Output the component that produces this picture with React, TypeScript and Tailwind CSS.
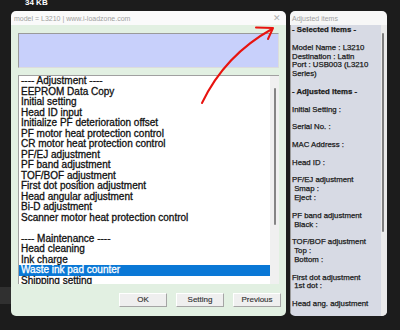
import React from "react";

const listItems: string[] = [
  "---- Adjustment ----",
  "EEPROM Data Copy",
  "Initial setting",
  "Head ID input",
  "Initialize PF deterioration offset",
  "PF motor heat protection control",
  "CR motor heat protection control",
  "PF/EJ adjustment",
  "PF band adjustment",
  "TOF/BOF adjustment",
  "First dot position adjustment",
  "Head angular adjustment",
  "Bi-D adjustment",
  "Scanner motor heat protection control",
  "",
  "---- Maintenance ----",
  "Head cleaning",
  "Ink charge",
  "Waste ink pad counter",
  "Shipping setting",
  "Printer head nozzle check",
];

const rightLines: { t: string; b?: boolean }[] = [
  { t: "- Selected items -", b: true },
  { t: "" },
  { t: "Model Name : L3210" },
  { t: "Destination : Latin" },
  { t: "Port : USB003 (L3210" },
  { t: "Series)" },
  { t: "" },
  { t: "- Adjusted items -", b: true },
  { t: "" },
  { t: "Initial Setting :" },
  { t: "" },
  { t: "Serial No. :" },
  { t: "" },
  { t: "MAC Address :" },
  { t: "" },
  { t: "Head ID :" },
  { t: "" },
  { t: "PF/EJ adjustment" },
  { t: "\u00a0Smap :" },
  { t: "\u00a0Eject :" },
  { t: "" },
  { t: "PF band adjustment" },
  { t: "\u00a0Black :" },
  { t: "" },
  { t: "TOF/BOF adjustment" },
  { t: "\u00a0Top :" },
  { t: "\u00a0Bottom :" },
  { t: "" },
  { t: "First dot adjustment" },
  { t: "\u00a01st dot :" },
  { t: "" },
  { t: "Head ang. adjustment" },
];

function Btn({ label }: { label: string }) {
  return (
    <div className="w-[48px] h-[14px] flex items-center justify-center bg-[#efefef] border border-t-[#ffffff] border-l-[#ffffff] border-r-[#a5a5a5] border-b-[#a5a5a5] text-[8px] text-[#333] leading-none [-webkit-text-stroke:0.15px_currentColor]">
      {label}
    </div>
  );
}

export default function App() {
  return (
    <div className="relative w-[400px] h-[330px] overflow-hidden bg-[#1c1c1c] font-['Liberation_Sans',Arial,sans-serif]">
      <div className="h-[11px] pl-[25px] text-[8px] font-bold text-white leading-[6px]">34 KB</div>
      <div className="absolute left-0 top-[287px] w-[11px] h-[17px] bg-[#303030]" />
      <div className="flex pl-[11px] gap-[4px]">
        {/* Main dialog */}
        <div className="w-[275px] h-[305px] flex flex-col rounded-[5px] overflow-hidden">
          <div className="h-[14px] bg-[#fafafa] flex items-center justify-between pl-[3px] pr-[5px]">
            <span className="text-[7px] text-[#a0a0a0] leading-none">model = L3210 | www.i-loadzone.com</span>
            <span className="text-[9px] text-[#b0b0b0] leading-none">✕</span>
          </div>
          <div className="flex-1 bg-[#e2f0e2] pl-[7px] pr-[7px] pt-[8px] flex flex-col">
            <div className="h-[35px] bg-[#c8d0fb] border border-t-[#9a9a9a] border-l-[#9a9a9a] border-r-[#dcdcdc] border-b-[#dcdcdc]" />
            <div className="mt-[7px] h-[209px] flex bg-white border-l border-t border-[#a0a0a0] overflow-hidden">
              <div className="flex-1 overflow-hidden">
                {listItems.map((it, i) => (
                  <div
                    key={i}
                    className={
                      "h-[10.5px] leading-[10.5px] pl-[2px] text-[10px] whitespace-nowrap [-webkit-text-stroke:0.3px_currentColor] " +
                      (it === "Waste ink pad counter" ? "bg-[#0a78d6] text-white" : "text-[#111]")
                    }
                  >
                    {it}
                  </div>
                ))}
              </div>
              <div className="w-[9px] bg-[#f0f0f0] flex justify-center pt-[12px]">
                <div className="w-[2px] h-[137px] rounded-full bg-[#858585]" />
              </div>
            </div>
            <div className="mt-[9px] flex justify-end gap-[9px] mr-[-2px]">
              <Btn label="OK" />
              <Btn label="Setting" />
              <Btn label="Previous" />
            </div>
          </div>
        </div>
        {/* Right panel */}
        <div className="w-[97px] h-[305px] flex flex-col rounded-[5px] overflow-hidden">
          <div className="h-[14px] bg-[#f7f7f7] flex items-center pl-[2px]">
            <span className="text-[7px] text-[#a0a0a0] leading-none">Adjusted items</span>
          </div>
          <div className="flex-1 flex bg-[#d7dae4] overflow-hidden border-l border-[#9a9a9a]">
            <div className="flex-1 pl-[1px] pt-[1px] overflow-hidden">
              {rightLines.map((l, i) => (
                <div
                  key={i}
                  className={
                    "h-[8.85px] leading-[8.85px] text-[7.8px] whitespace-nowrap text-[#1a1a1a] [-webkit-text-stroke:0.25px_currentColor] " +
                    (l.b ? "font-bold" : "")
                  }
                >
                  {l.t}
                </div>
              ))}
            </div>
            <div className="w-[6px] bg-[#eaeaea] flex justify-start pl-[1px] pt-[8px]">
              <div className="w-[2px] h-[199px] rounded-full bg-[#7d7d7d]" />
            </div>
          </div>
        </div>
      </div>
      <svg className="absolute left-0 top-0 pointer-events-none" width="400" height="330" viewBox="0 0 400 330">
        <path d="M202 103 Q 225 55 272 29" fill="none" stroke="#e8130f" strokeWidth="2" strokeLinecap="round" />
        <path d="M256 27.5 L273 28 L268 39" fill="none" stroke="#e8130f" strokeWidth="2" strokeLinecap="round" strokeLinejoin="round" />
      </svg>
    </div>
  );
}
